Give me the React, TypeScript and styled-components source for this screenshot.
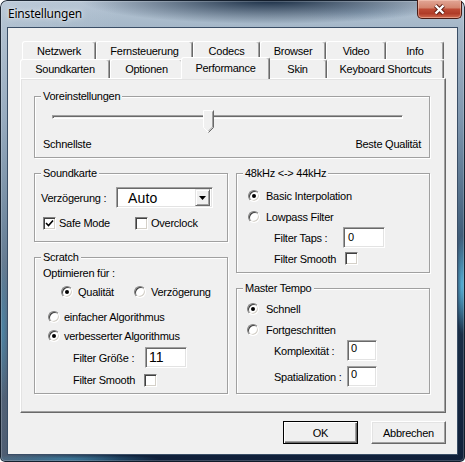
import React from 'react';
import styled, { createGlobalStyle } from 'styled-components';

const GlobalStyle = createGlobalStyle`
  html, body { margin: 0; padding: 0; background: #ffffff; }
  body { font-family: 'Liberation Sans', Arial, sans-serif; }
  * { box-sizing: border-box; }
`;

const topTabs = [
    { label: 'Netzwerk', w: 74 },
    { label: 'Fernsteuerung', w: 97 },
    { label: 'Codecs', w: 67 },
    { label: 'Browser', w: 66 },
    { label: 'Video', w: 60 },
    { label: 'Info', w: 58 },
];

const bottomTabs = [
    { label: 'Soundkarten', w: 90 },
    { label: 'Optionen', w: 73 },
    { label: 'Performance', w: 85, active: true },
    { label: 'Skin', w: 59 },
    { label: 'Keyboard Shortcuts', w: 117 },
];

// slider preset: 0 = Schnellste, 9 = Beste Qualität
const preset = 4;
const presetMax = 9;

const Radio = ({ checked }: { checked?: boolean }) => <RadioMark $checked={!!checked} />;

const Check = ({ checked }: { checked?: boolean }) => (
    <CheckMark>
        {checked && (
            <svg width="9" height="9" viewBox="0 0 9 9">
                <path d="M1 4 L3.5 6.5 L8 1.5" fill="none" stroke="#000" strokeWidth="1.6" />
            </svg>
        )}
    </CheckMark>
);

export default function App() {
    return (
        <>
            <GlobalStyle />
            <Window>
                {/* Aero title bar */}
                <TitleBar>
                    <TitleText>Einstellungen</TitleText>
                    <CloseButton>
                        <svg width="13" height="11" viewBox="0 0 13 11">
                            <path d="M2.5 1.5 L10.5 9.5 M10.5 1.5 L2.5 9.5" stroke="#5a1a10" strokeWidth="4.2" />
                            <path d="M2.5 1.5 L10.5 9.5 M10.5 1.5 L2.5 9.5" stroke="#ffffff" strokeWidth="2.4" />
                        </svg>
                    </CloseButton>
                </TitleBar>

                <Client>
                    {/* Tabs, two rows */}
                    <TabRow $h={18} $offset={2}>
                        {topTabs.map((t) => (
                            <Tab key={t.label} $w={t.w}>{t.label}</Tab>
                        ))}
                    </TabRow>
                    <TabRow $h={19} $offset={0}>
                        {bottomTabs.map((t) => (
                            <Tab key={t.label} $w={t.w} $active={t.active}>{t.label}</Tab>
                        ))}
                    </TabRow>

                    <Panel>
                        {/* Voreinstellungen */}
                        <GroupBox $h={62}>
                            <GroupTitle>Voreinstellungen</GroupTitle>
                            <SliderBox>
                                <Track />
                                <Thumb
                                    width="11"
                                    height="23"
                                    viewBox="0 0 11 23"
                                    style={{ left: `calc((100% - 11px) * ${preset / presetMax})` }}
                                >
                                    <path d="M0.5 0.5 H10.5 V17.5 L5.5 22.5 L0.5 17.5 Z" fill="#f0f0f0" />
                                    <path d="M0.5 17.5 V0.5 H10" fill="none" stroke="#ffffff" />
                                    <path d="M0.5 17.5 L5 22" fill="none" stroke="#ffffff" />
                                    <path d="M10.5 0.5 V17.5 L5.5 22.5" fill="none" stroke="#696969" />
                                    <path d="M9.5 1.5 V17 L5.5 21" fill="none" stroke="#a0a0a0" />
                                </Thumb>
                            </SliderBox>
                            <SliderLabels>
                                <Text>Schnellste</Text>
                                <Text>Beste Qualität</Text>
                            </SliderLabels>
                        </GroupBox>

                        <Columns>
                            <Column>
                                {/* Soundkarte */}
                                <GroupBox $h={69}>
                                    <GroupTitle>Soundkarte</GroupTitle>
                                    <Row $h={21} $mt={7} $pl={6}>
                                        <FieldLabel $w={75}>Verzögerung :</FieldLabel>
                                        <Combo>
                                            <ComboValue>Auto</ComboValue>
                                            <ComboArrow>
                                                <svg width="7" height="4" viewBox="0 0 7 4">
                                                    <path d="M0 0 H7 L3.5 4 Z" fill="#000" />
                                                </svg>
                                            </ComboArrow>
                                        </Combo>
                                    </Row>
                                    <Row $h={14} $mt={8} $pl={8}>
                                        <Choice $w={92} $gap={3}>
                                            <Check checked />
                                            <Text>Safe Mode</Text>
                                        </Choice>
                                        <Choice $gap={3}>
                                            <Check />
                                            <Text>Overclock</Text>
                                        </Choice>
                                    </Row>
                                </GroupBox>

                                {/* Scratch */}
                                <GroupBox $h={137}>
                                    <GroupTitle>Scratch</GroupTitle>
                                    <Row $h={14} $mt={2} $pl={8}>
                                        <Text>Optimieren für :</Text>
                                    </Row>
                                    <Row $h={14} $mt={5} $pl={26}>
                                        <Choice $w={73} $gap={5}>
                                            <Radio checked />
                                            <Text>Qualität</Text>
                                        </Choice>
                                        <Choice $gap={5}>
                                            <Radio />
                                            <Text>Verzögerung</Text>
                                        </Choice>
                                    </Row>
                                    <Row $h={14} $mt={11} $pl={13}>
                                        <Choice $gap={4}>
                                            <Radio />
                                            <Text>einfacher Algorithmus</Text>
                                        </Choice>
                                    </Row>
                                    <Row $h={14} $mt={5} $pl={13}>
                                        <Choice $gap={4}>
                                            <Radio checked />
                                            <Text>verbesserter Algorithmus</Text>
                                        </Choice>
                                    </Row>
                                    <Row $h={21} $mt={4} $pl={38}>
                                        <FieldLabel $w={72}>Filter Größe :</FieldLabel>
                                        <TextBox $w={42} $big $top>11</TextBox>
                                    </Row>
                                    <Row $h={14} $mt={5} $pl={38}>
                                        <FieldLabel $w={71}>Filter Smooth</FieldLabel>
                                        <Check />
                                    </Row>
                                </GroupBox>
                            </Column>

                            <Column>
                                {/* 48kHz <-> 44kHz */}
                                <GroupBox $h={100}>
                                    <GroupTitle>48kHz &lt;-&gt; 44kHz</GroupTitle>
                                    <Row $h={21} $mt={5} $pl={11}>
                                        <Choice $gap={6}>
                                            <Radio checked />
                                            <Text>Basic Interpolation</Text>
                                        </Choice>
                                    </Row>
                                    <Row $h={21} $pl={11}>
                                        <Choice $gap={6}>
                                            <Radio />
                                            <Text>Lowpass Filter</Text>
                                        </Choice>
                                    </Row>
                                    <Row $h={21} $pl={37}>
                                        <FieldLabel $w={69}>Filter Taps :</FieldLabel>
                                        <TextBox $w={42}>0</TextBox>
                                    </Row>
                                    <Row $h={21} $pl={37}>
                                        <FieldLabel $w={71}>Filter Smooth</FieldLabel>
                                        <Check />
                                    </Row>
                                </GroupBox>

                                {/* Master Tempo */}
                                <GroupBox $h={106}>
                                    <GroupTitle>Master Tempo</GroupTitle>
                                    <Row $h={21} $mt={3} $pl={10}>
                                        <Choice $gap={7}>
                                            <Radio checked />
                                            <Text>Schnell</Text>
                                        </Choice>
                                    </Row>
                                    <Row $h={21} $pl={10}>
                                        <Choice $gap={7}>
                                            <Radio />
                                            <Text>Fortgeschritten</Text>
                                        </Choice>
                                    </Row>
                                    <Row $h={21} $pl={37}>
                                        <FieldLabel $w={73}>Komplexität :</FieldLabel>
                                        <TextBox $w={30} $top>0</TextBox>
                                    </Row>
                                    <Row $h={21} $mt={5} $pl={37}>
                                        <FieldLabel $w={73}>Spatialization :</FieldLabel>
                                        <TextBox $w={30} $top>0</TextBox>
                                    </Row>
                                </GroupBox>
                            </Column>
                        </Columns>
                    </Panel>

                    <ButtonRow>
                        <DialogButton $default>OK</DialogButton>
                        <DialogButton>Abbrechen</DialogButton>
                    </ButtonRow>
                </Client>
            </Window>
        </>
    );
}

const Window = styled.div`
    width: 465px;
    height: 462px;
    display: flex;
    flex-direction: column;
    border-radius: 7px 7px 5px 5px;
    overflow: hidden;
    background:
        radial-gradient(190px 24px at 270px 0px, rgba(14, 34, 58, 0.95), rgba(14, 34, 58, 0)),
        radial-gradient(60px 10px at 360px 12px, rgba(150, 175, 200, 0.5), rgba(150, 175, 200, 0)),
        radial-gradient(6px 50px at 462px 285px, rgba(90, 190, 230, 0.9), rgba(90, 190, 230, 0)),
        radial-gradient(6px 70px at 3px 330px, rgba(70, 150, 190, 0.6), rgba(70, 150, 190, 0)),
        radial-gradient(90px 5px at 70px 459px, rgba(70, 160, 200, 0.6), rgba(70, 160, 200, 0)),
        linear-gradient(90deg, rgba(200, 212, 224, 0.35) 0px, rgba(200, 212, 224, 0) 120px),
        linear-gradient(180deg, #b6c5d4 0px, #a6b8c9 25px, #7e96ae 120px, #42607c 230px, #1a2e47 330px, #10203a 462px);
    box-shadow: inset 0 0 0 1px rgba(12, 22, 36, 0.9), inset 0 0 0 2px rgba(255, 255, 255, 0.2);
`;

const TitleBar = styled.div`
    flex: none;
    height: 27px;
    display: flex;
    align-items: flex-start;
`;

const TitleText = styled.div`
    margin: 6px 0 0 8px;
    font-family: 'Noto Sans', 'Open Sans', sans-serif;
    font-size: 12px;
    line-height: 16px;
    letter-spacing: -0.2px;
    color: #000;
    text-shadow: 0 0 6px rgba(255, 255, 255, 0.95), 0 0 2px rgba(255, 255, 255, 0.8);
`;

const CloseButton = styled.div`
    margin: 0 3px 0 auto;
    width: 45px;
    height: 19px;
    display: flex;
    align-items: center;
    justify-content: center;
    border: 1px solid #4a1d16;
    border-top: none;
    border-radius: 0 0 5px 5px;
    background: linear-gradient(180deg, #e2a696 0%, #d48670 42%, #bd4a34 52%, #b03c28 75%, #d06c50 100%);
    box-shadow: inset 0 0 0 1px rgba(255, 215, 200, 0.45);
`;

const Client = styled.div`
    flex: 1;
    margin: 0 7px 7px 7px;
    border: 1px solid #3a4e66;
    background: #f0f0f0;
    padding: 13px 11px 0 12px;
    display: flex;
    flex-direction: column;
`;

const TabRow = styled.div<{ $h: number; $offset: number }>`
    display: flex;
    height: ${(p) => p.$h}px;
    margin-left: ${(p) => p.$offset}px;
`;

const Tab = styled.div<{ $w: number; $active?: boolean }>`
    flex: none;
    width: ${(p) => p.$w + (p.$active ? 4 : 0)}px;
    height: ${(p) => (p.$active ? 'calc(100% + 3px)' : '100%')};
    margin: ${(p) => (p.$active ? '-2px -2px 0 -2px' : '0')};
    padding-bottom: ${(p) => (p.$active ? 2 : 0)}px;
    position: relative;
    z-index: ${(p) => (p.$active ? 2 : 1)};
    display: flex;
    align-items: center;
    justify-content: center;
    background: #f0f0f0;
    border-top: 1px solid #ffffff;
    border-left: 1px solid #ffffff;
    border-right: 1px solid #696969;
    box-shadow: inset -1px 0 0 #a0a0a0;
    border-radius: 3px 3px 0 0;
    font-size: 11px;
    letter-spacing: -0.25px;
    color: #000;
    white-space: nowrap;
`;

const Panel = styled.div`
    height: 335px;
    border: 1px solid;
    border-color: #ffffff #696969 #696969 #ffffff;
    box-shadow: inset -1px -1px 0 #a0a0a0, inset 1px 1px 0 #e3e3e3;
    padding: 17px 15px 0 13px;
    display: flex;
    flex-direction: column;
    gap: 15px;
`;

const GroupBox = styled.div<{ $h: number }>`
    height: ${(p) => p.$h}px;
    border: 1px solid #a0a0a0;
    box-shadow: inset 1px 1px 0 #ffffff, 1px 1px 0 #ffffff;
    display: flex;
    flex-direction: column;
`;

const GroupTitle = styled.div`
    align-self: flex-start;
    margin: -8px 0 0 6px;
    padding: 0 2px;
    height: 14px;
    line-height: 14px;
    background: #f0f0f0;
    font-size: 11px;
    letter-spacing: -0.25px;
    color: #000;
    white-space: nowrap;
`;

const Columns = styled.div`
    display: grid;
    grid-template-columns: 194px 194px;
    column-gap: 8px;
    align-items: start;
`;

const Column = styled.div`
    display: flex;
    flex-direction: column;
    gap: 15px;
`;

const Row = styled.div<{ $h: number; $mt?: number; $pl?: number }>`
    display: flex;
    align-items: center;
    height: ${(p) => p.$h}px;
    margin-top: ${(p) => p.$mt ?? 0}px;
    padding-left: ${(p) => p.$pl ?? 0}px;
`;

const Text = styled.span`
    font-size: 11px;
    line-height: 14px;
    letter-spacing: -0.25px;
    color: #000;
    white-space: nowrap;
`;

const FieldLabel = styled(Text)<{ $w: number }>`
    flex: none;
    width: ${(p) => p.$w}px;
`;

const Choice = styled.label<{ $w?: number; $gap: number }>`
    display: flex;
    align-items: center;
    gap: ${(p) => p.$gap}px;
    width: ${(p) => (p.$w ? `${p.$w}px` : 'auto')};
    flex: none;
`;

const RadioMark = styled.span<{ $checked: boolean }>`
    flex: none;
    position: relative;
    width: 12px;
    height: 12px;
    border-radius: 50%;
    border: 1px solid;
    border-color: #808080 #ffffff #ffffff #808080;
    box-shadow: inset 1px 1px 0 #404040, inset -1px -1px 0 #d4d0c8;
    background: #ffffff;
    &::after {
        content: '';
        display: ${(p) => (p.$checked ? 'block' : 'none')};
        position: absolute;
        left: 3px;
        top: 3px;
        width: 4px;
        height: 4px;
        border-radius: 50%;
        background: #000;
    }
`;

const CheckMark = styled.span`
    flex: none;
    width: 13px;
    height: 13px;
    display: flex;
    align-items: center;
    justify-content: center;
    border: 1px solid;
    border-color: #808080 #ffffff #ffffff #808080;
    box-shadow: inset 1px 1px 0 #404040, inset -1px -1px 0 #d4d0c8;
    background: #ffffff;
`;

const TextBox = styled.div<{ $w: number; $big?: boolean; $top?: boolean }>`
    flex: none;
    width: ${(p) => p.$w}px;
    height: 21px;
    display: flex;
    align-items: ${(p) => (p.$top ? 'flex-start' : 'center')};
    padding: ${(p) => (p.$top ? '1px 0 0 3px' : '0 0 0 4px')};
    border: 1px solid;
    border-color: #a0a0a0 #ffffff #ffffff #a0a0a0;
    box-shadow: inset 1px 1px 0 #696969, inset -1px -1px 0 #e3e3e3;
    background: #ffffff;
    font-size: ${(p) => (p.$big ? 14 : 11)}px;
    line-height: ${(p) => (p.$big ? 16 : 13)}px;
    color: #000;
`;

const Combo = styled.div`
    flex: none;
    width: 97px;
    height: 21px;
    display: flex;
    align-items: center;
    padding: 2px;
    border: 1px solid;
    border-color: #a0a0a0 #ffffff #ffffff #a0a0a0;
    box-shadow: inset 1px 1px 0 #696969, inset -1px -1px 0 #e3e3e3;
    background: #ffffff;
`;

const ComboValue = styled.span`
    flex: 1;
    padding-left: 9px;
    font-size: 14px;
    line-height: 16px;
    letter-spacing: 0.2px;
    color: #000;
`;

const ComboArrow = styled.span`
    flex: none;
    width: 15px;
    height: 17px;
    display: flex;
    align-items: center;
    justify-content: center;
    background: #f0f0f0;
    border: 1px solid;
    border-color: #e3e3e3 #696969 #696969 #e3e3e3;
    box-shadow: inset 1px 1px 0 #ffffff, inset -1px -1px 0 #a0a0a0;
`;

const SliderBox = styled.div`
    position: relative;
    height: 24px;
    margin: 6px 26px 0 17px;
`;

const Track = styled.div`
    margin-top: 6px;
    height: 4px;
    border: 1px solid;
    border-color: #a0a0a0 #ffffff #ffffff #a0a0a0;
    box-shadow: inset 1px 1px 0 #696969;
`;

const Thumb = styled.svg`
    position: absolute;
    top: 1px;
`;

const SliderLabels = styled.div`
    display: flex;
    justify-content: space-between;
    height: 14px;
    margin-top: 4px;
    padding: 0 8px;
`;

const ButtonRow = styled.div`
    display: flex;
    justify-content: flex-end;
    gap: 13px;
    margin-top: 8px;
`;

const DialogButton = styled.button<{ $default?: boolean }>`
    width: 75px;
    height: 23px;
    padding: 0;
    font-family: 'Liberation Sans', Arial, sans-serif;
    font-size: 11px;
    letter-spacing: -0.25px;
    color: #000;
    background: #f0f0f0;
    border: 1px solid;
    border-color: ${(p) => (p.$default ? '#000000' : '#ffffff #696969 #696969 #ffffff')};
    box-shadow: ${(p) =>
        p.$default
            ? 'inset 1px 1px 0 #ffffff, inset -1px -1px 0 #696969, inset -2px -2px 0 #a0a0a0'
            : 'inset -1px -1px 0 #a0a0a0, inset 1px 1px 0 #e3e3e3'};
`;
